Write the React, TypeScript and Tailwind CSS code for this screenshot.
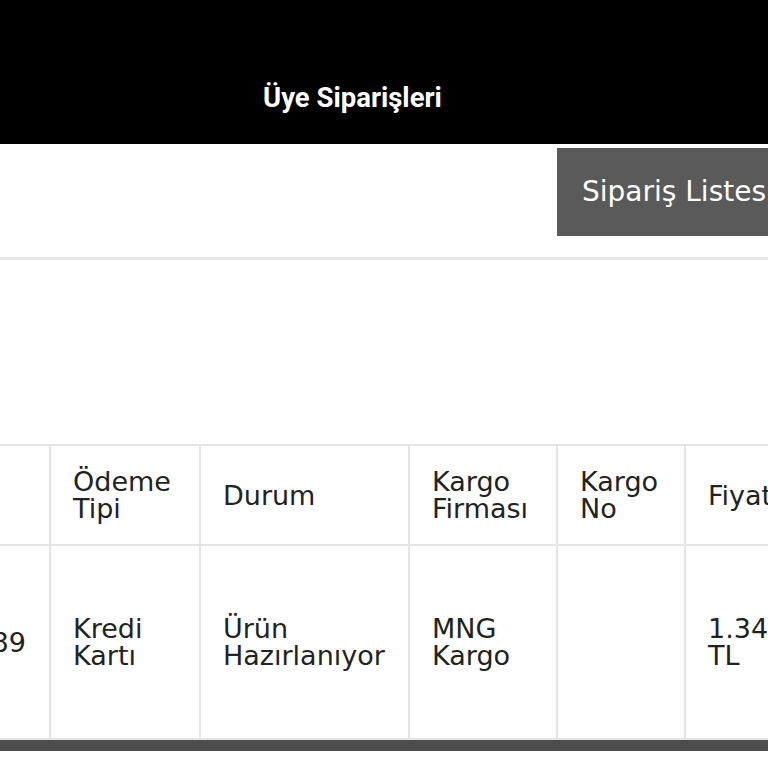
import React from "react";

const cellFont = { fontFamily: '"DejaVu Sans", sans-serif' };

type Row = {
    no: string;
    odeme: React.ReactNode;
    durum: React.ReactNode;
    firma: React.ReactNode;
    kargoNo: string;
    fiyat: React.ReactNode;
};

const orders: Row[] = [
    {
        no: "10389",
        odeme: (<>Kredi<br />Kartı</>),
        durum: (<>Ürün<br />Hazırlanıyor</>),
        firma: (<>MNG<br />Kargo</>),
        kargoNo: "",
        fiyat: (<>1.349,90<br />TL</>),
    },
];

export default function App() {
    return (
        <div className="w-[768px] h-[768px] overflow-hidden bg-white">
            {/* Top bar */}
            <div className="h-[144px] bg-black flex items-start pt-[84px] pl-[263px]">
                <h1
                    className="text-white font-bold text-[27.5px] leading-[27px]"
                    style={{ fontFamily: "Roboto, sans-serif" }}
                >
                    Üye Siparişleri
                </h1>
            </div>

            {/* Button row */}
            <div className="pt-[4px] pb-[21px] border-b-[3px] border-[#e8e8e8] flex">
                <button
                    className="ml-[557px] shrink-0 h-[88px] px-[25px] bg-[#5a5a5a] text-white text-[28px] leading-none whitespace-nowrap"
                    style={cellFont}
                >
                    Sipariş Listesi
                </button>
            </div>

            {/* Orders table */}
            <div className="mt-[184px] -ml-[84px] w-[1100px]">
                <table
                    className="table-fixed border-collapse text-[27px] leading-[27px] text-[#222]"
                    style={cellFont}
                >
                    <colgroup>
                        <col className="w-[133px]" />
                        <col className="w-[150px]" />
                        <col className="w-[209px]" />
                        <col className="w-[148px]" />
                        <col className="w-[128px]" />
                        <col className="w-[200px]" />
                    </colgroup>
                    <thead>
                        <tr className="h-[100px]">
                            <th className="border-2 border-[#e4e4e4] pl-[22px] text-left font-normal">No</th>
                            <th className="border-2 border-[#e4e4e4] pl-[22px] text-left font-normal">Ödeme<br />Tipi</th>
                            <th className="border-2 border-[#e4e4e4] pl-[22px] text-left font-normal">Durum</th>
                            <th className="border-2 border-[#e4e4e4] pl-[22px] text-left font-normal">Kargo<br />Firması</th>
                            <th className="border-2 border-[#e4e4e4] pl-[22px] text-left font-normal">Kargo<br />No</th>
                            <th className="border-2 border-[#e4e4e4] pl-[22px] text-left font-normal">Fiyat</th>
                        </tr>
                    </thead>
                    <tbody>
                        {orders.map((o) => (
                            <tr key={o.no} className="h-[194px]">
                                <td className="border-2 border-[#e4e4e4] pl-[22px]">{o.no}</td>
                                <td className="border-2 border-[#e4e4e4] pl-[22px]">{o.odeme}</td>
                                <td className="border-2 border-[#e4e4e4] pl-[22px]">{o.durum}</td>
                                <td className="border-2 border-[#e4e4e4] pl-[22px]">{o.firma}</td>
                                <td className="border-2 border-[#e4e4e4] pl-[22px]">{o.kargoNo}</td>
                                <td className="border-2 border-[#e4e4e4] pl-[22px]">{o.fiyat}</td>
                            </tr>
                        ))}
                    </tbody>
                </table>
            </div>

            {/* Bottom bar */}
            <div className="h-[11px] bg-[#4d4d4d]" />
        </div>
    );
}
